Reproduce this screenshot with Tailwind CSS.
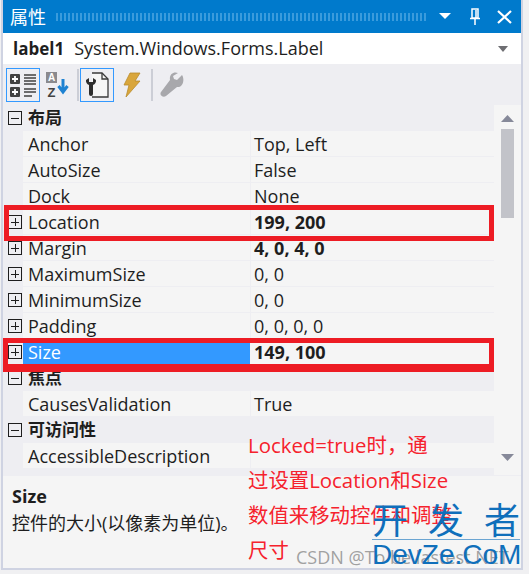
<!DOCTYPE html>
<html lang="zh">
<head>
<meta charset="utf-8">
<script src="https://cdn.jsdelivr.net/npm/@tailwindcss/browser@4"></script>
</head>
<body class="bg-[#f0f0f2] overflow-hidden">
<div class="relative w-[529px] h-[574px] overflow-hidden font-['Open_Sans','Noto_Sans_CJK_SC',sans-serif] text-[#1e1e1e] text-[18px]">
  <div class="absolute left-[1px] top-0 w-[522px] h-[570px] bg-[#cfd3e2]"></div>
  <div class="relative ml-[3px] w-[518px] h-[568px] flex flex-col bg-[#eeeef2]">
    <div class="h-[33px] bg-[#007acc] flex items-center pl-[7px] pr-[9px] gap-[10px] text-white">
      <span class="text-[18px] leading-none">属性</span>
      <div class="flex-1 h-[8px] bg-[repeating-linear-gradient(90deg,#3a9bdc_0_2px,transparent_2px_4px)]"></div>
      <svg width="12" height="7" viewBox="0 0 12 7" class="ml-[2px]"><path d="M0 0h12L6 6z" fill="#fff"/></svg>
      <svg width="12" height="18" viewBox="0 0 12 18" class="ml-[8px]"><path d="M3 1h6v9H3zM1 10.500h10M6 11v6M7 2v8" fill="none" stroke="#fff" stroke-width="1.500"/></svg>
      <svg width="15" height="14" viewBox="0 0 15 14" class="ml-[6px]"><path d="M1 1l13 12M14 1L1 13" stroke="#fff" stroke-width="2.200"/></svg>
    </div>
    <div class="h-[31px] bg-white flex items-center pl-[10px] pr-[13px]">
      <span class="font-bold text-[17px]">label1</span><span class="ml-[10px]">System.Windows.Forms.Label</span>
      <svg width="10" height="6" viewBox="0 0 10 6" class="ml-auto"><path d="M0 0h10L5 6z" fill="#6e6e72"/></svg>
    </div>
    <div class="h-[41px] flex items-center pl-[3px]">
      <div class="w-[34px] h-[34px] border border-[#3399ff] flex items-center justify-center">
        <svg width="28" height="26" viewBox="0 0 28 26"><rect x="1" y="2" width="10" height="10" rx="1" fill="#424242"/><rect x="1" y="15" width="10" height="10" rx="1" fill="#424242"/><path d="M3 7h6M6 4v6M3 20h6M6 17v6" stroke="#fff" stroke-width="1.800"/><path d="M15 3h12M15 6h12M15 9h12M15 12h12M15 17h12M15 20h12M15 24h8" stroke="#424242" stroke-width="1.500"/></svg>
      </div>
      <svg width="24" height="28" viewBox="0 0 24 28" class="ml-[5px]"><rect x="1" y="1" width="11" height="11" fill="#8a8a8e"/><text x="6.500" y="10" font-size="10" font-weight="700" fill="#fff" text-anchor="middle" font-family="Liberation Sans">A</text><text x="6.500" y="26" font-size="13" font-weight="700" fill="#424242" text-anchor="middle" font-family="Liberation Sans">Z</text><path d="M18 8v13M13.500 15l4.500 6 4.500-6" fill="none" stroke="#1e82d2" stroke-width="3"/></svg>
      <div class="w-[2px] h-[32px] bg-[#ccced6] ml-[8px]"></div>
      <div class="w-[34px] h-[34px] border border-[#3399ff] flex items-center justify-center ml-[1px]">
        <svg width="24" height="26" viewBox="0 0 24 26"><path d="M7 1h10l6 6v18H7" fill="#f6f6f6" stroke="#3a3a3a" stroke-width="1.300"/><path d="M17 1v6h6" fill="none" stroke="#3a3a3a" stroke-width="1.300"/><path d="M1 8a5 5 0 0 0 3 5v9a2 2 0 0 0 4 0v-9a5 5 0 0 0 3-5l-3-2v4H4V6z" fill="#2d2d2d"/></svg>
      </div>
      <svg width="18" height="26" viewBox="0 0 18 26" class="ml-[9px]"><path d="M7 1h10l-5 8h5L3 25l3-12H1z" fill="#d9a63c" stroke="#b98b2c" stroke-width=".8"/></svg>
      <div class="w-[2px] h-[32px] bg-[#ccced6] ml-[10px]"></div>
      <svg width="25" height="26" viewBox="0 0 25 26" class="ml-[6px]"><path d="M23 3l-5 5-3-1-1-3 5-3c-4-2-9 1-8 7L2 20c-2 3 2 6 5 4l11-9c6 1 8-8 5-12z" fill="#a8a8ac"/></svg>
    </div>
    <div class="flex flex-1 min-h-0">
      <div class="w-[491px] h-[370px] overflow-hidden flex flex-col">
        <div class="h-[26px] flex items-center"><span class="w-[20px] pl-[5px] flex"><span class="w-[14px] h-[14px] border border-[#1e1e1e] flex items-center justify-center"><span class="w-[8px] h-px bg-[#1e1e1e]"></span></span></span><span class="font-bold text-[17px] pl-[5px]">布局</span></div>
        <div class="h-[26px] flex ml-[20px] bg-[#f5f5f5] border-b border-[#eeeef2] items-center"><span class="w-[227px] pl-[5px] pt-[2px]">Anchor</span><span class="pl-[3px] pt-[2px] border-l border-[#eeeef2] h-full flex items-center">Top, Left</span></div>
        <div class="h-[26px] flex ml-[20px] bg-[#f5f5f5] border-b border-[#eeeef2] items-center"><span class="w-[227px] pl-[5px] pt-[2px]">AutoSize</span><span class="pl-[3px] pt-[2px] border-l border-[#eeeef2] h-full flex items-center">False</span></div>
        <div class="h-[26px] flex ml-[20px] bg-[#f5f5f5] border-b border-[#eeeef2] items-center"><span class="w-[227px] pl-[5px] pt-[2px]">Dock</span><span class="pl-[3px] pt-[2px] border-l border-[#eeeef2] h-full flex items-center">None</span></div>
        <div class="h-[26px] flex items-center"><span class="w-[20px] pl-[5px] flex"><span class="w-[14px] h-[14px] border border-[#1e1e1e] relative flex items-center justify-center"><span class="w-[8px] h-px bg-[#1e1e1e]"></span><span class="absolute w-px h-[8px] bg-[#1e1e1e]"></span></span></span><span class="flex-1 flex h-full items-center bg-[#f5f5f5] border-b border-[#eeeef2]"><span class="w-[227px] pl-[5px] pt-[2px]">Location</span><span class="pl-[3px] pt-[2px] font-bold border-l border-[#eeeef2] h-full flex items-center">199, 200</span></span></div>
        <div class="h-[26px] flex items-center"><span class="w-[20px] pl-[5px] flex"><span class="w-[14px] h-[14px] border border-[#1e1e1e] relative flex items-center justify-center"><span class="w-[8px] h-px bg-[#1e1e1e]"></span><span class="absolute w-px h-[8px] bg-[#1e1e1e]"></span></span></span><span class="flex-1 flex h-full items-center bg-[#f5f5f5] border-b border-[#eeeef2]"><span class="w-[227px] pl-[5px] pt-[2px]">Margin</span><span class="pl-[3px] pt-[2px] font-bold border-l border-[#eeeef2] h-full flex items-center">4, 0, 4, 0</span></span></div>
        <div class="h-[26px] flex items-center"><span class="w-[20px] pl-[5px] flex"><span class="w-[14px] h-[14px] border border-[#1e1e1e] relative flex items-center justify-center"><span class="w-[8px] h-px bg-[#1e1e1e]"></span><span class="absolute w-px h-[8px] bg-[#1e1e1e]"></span></span></span><span class="flex-1 flex h-full items-center bg-[#f5f5f5] border-b border-[#eeeef2]"><span class="w-[227px] pl-[5px] pt-[2px]">MaximumSize</span><span class="pl-[3px] pt-[2px] border-l border-[#eeeef2] h-full flex items-center">0, 0</span></span></div>
        <div class="h-[26px] flex items-center"><span class="w-[20px] pl-[5px] flex"><span class="w-[14px] h-[14px] border border-[#1e1e1e] relative flex items-center justify-center"><span class="w-[8px] h-px bg-[#1e1e1e]"></span><span class="absolute w-px h-[8px] bg-[#1e1e1e]"></span></span></span><span class="flex-1 flex h-full items-center bg-[#f5f5f5] border-b border-[#eeeef2]"><span class="w-[227px] pl-[5px] pt-[2px]">MinimumSize</span><span class="pl-[3px] pt-[2px] border-l border-[#eeeef2] h-full flex items-center">0, 0</span></span></div>
        <div class="h-[26px] flex items-center"><span class="w-[20px] pl-[5px] flex"><span class="w-[14px] h-[14px] border border-[#1e1e1e] relative flex items-center justify-center"><span class="w-[8px] h-px bg-[#1e1e1e]"></span><span class="absolute w-px h-[8px] bg-[#1e1e1e]"></span></span></span><span class="flex-1 flex h-full items-center bg-[#f5f5f5] border-b border-[#eeeef2]"><span class="w-[227px] pl-[5px] pt-[2px]">Padding</span><span class="pl-[3px] pt-[2px] border-l border-[#eeeef2] h-full flex items-center">0, 0, 0, 0</span></span></div>
        <div class="h-[26px] flex items-center"><span class="w-[20px] pl-[5px] flex"><span class="w-[14px] h-[14px] border border-[#1e1e1e] relative flex items-center justify-center"><span class="w-[8px] h-px bg-[#1e1e1e]"></span><span class="absolute w-px h-[8px] bg-[#1e1e1e]"></span></span></span><span class="flex-1 flex h-full items-center bg-[#f5f5f5]"><span class="w-[227px] h-full pl-[5px] flex items-center bg-[#3399ff] text-white">Size</span><span class="pl-[4px] font-bold h-full flex items-center">149, 100</span></span></div>
        <div class="h-[26px] flex items-center"><span class="w-[20px] pl-[5px] flex"><span class="w-[14px] h-[14px] border border-[#1e1e1e] flex items-center justify-center"><span class="w-[8px] h-px bg-[#1e1e1e]"></span></span></span><span class="font-bold text-[17px] pl-[5px]">焦点</span></div>
        <div class="h-[26px] flex ml-[20px] bg-[#f5f5f5] border-b border-[#eeeef2] items-center"><span class="w-[227px] pl-[5px] pt-[2px]">CausesValidation</span><span class="pl-[3px] pt-[2px] border-l border-[#eeeef2] h-full flex items-center">True</span></div>
        <div class="h-[26px] flex items-center"><span class="w-[20px] pl-[5px] flex"><span class="w-[14px] h-[14px] border border-[#1e1e1e] flex items-center justify-center"><span class="w-[8px] h-px bg-[#1e1e1e]"></span></span></span><span class="font-bold text-[17px] pl-[5px]">可访问性</span></div>
        <div class="h-[26px] flex ml-[20px] bg-[#f5f5f5] border-b border-[#eeeef2] items-center"><span class="w-[227px] pl-[5px] pt-[2px]">AccessibleDescription</span><span class="pl-[3px] border-l border-[#eeeef2] h-full"></span></div>
      </div>
      <div class="w-[27px] h-[370px] bg-[#f5f5f5] flex flex-col items-center pt-[10px]">
        <svg width="13" height="7" viewBox="0 0 13 7"><path d="M0 7h13L6.500 0z" fill="#868999"/></svg>
        <div class="w-[13px] h-[89px] bg-[#c2c3c9] mt-[7px]"></div>
        <svg width="13" height="7" viewBox="0 0 13 7" class="mt-auto mb-[14px]"><path d="M0 0h13L6.500 7z" fill="#868999"/></svg>
      </div>
    </div>
    <div class="h-[93px] bg-[#f5f5f5] border-t border-[#eeeef2] pl-[9px] pt-[7px] shrink-0">
      <div class="font-bold leading-[26px] text-[18px]">Size</div>
      <div class="leading-[28px] text-[18px]">控件的大小(以像素为单位)。</div>
    </div>
  </div>
  <div class="absolute left-[4px] top-[205px] w-[490px] h-[36px] border-[5px] border-[#ed1c24]"></div>
  <div class="absolute left-[3px] top-[338px] w-[491px] h-[34px] border-x-[5px] border-t-[5px] border-b-[8px] border-[#ed1c24]"></div>
  <div class="absolute left-[248px] top-[428px] w-[215px] text-[#f5222d] text-[20.400px] leading-[35px]">
    <div>Locked=true时，通</div><div>过设置Location和Size</div><div>数值来移动控件和调整</div><div>尺寸</div>
  </div>
  <div class="absolute left-[296px] top-[545px] text-[18px] leading-[24px] text-[#8a8a8a]/80">CSDN @To be lastest.NET</div>
  <div class="absolute left-[372px] top-[503px] w-[148px] text-[#0f6fbb] leading-none">
    <div class="text-[36px] leading-[36px] border-b border-[#0f6fbb]/60 flex justify-between"><span>开</span><span>发</span><span>者</span></div>
    <div class="text-[28px] font-['Liberation_Sans'] leading-[30px]">DevZe.CoM</div>
  </div>
</div>
</body>
</html>
